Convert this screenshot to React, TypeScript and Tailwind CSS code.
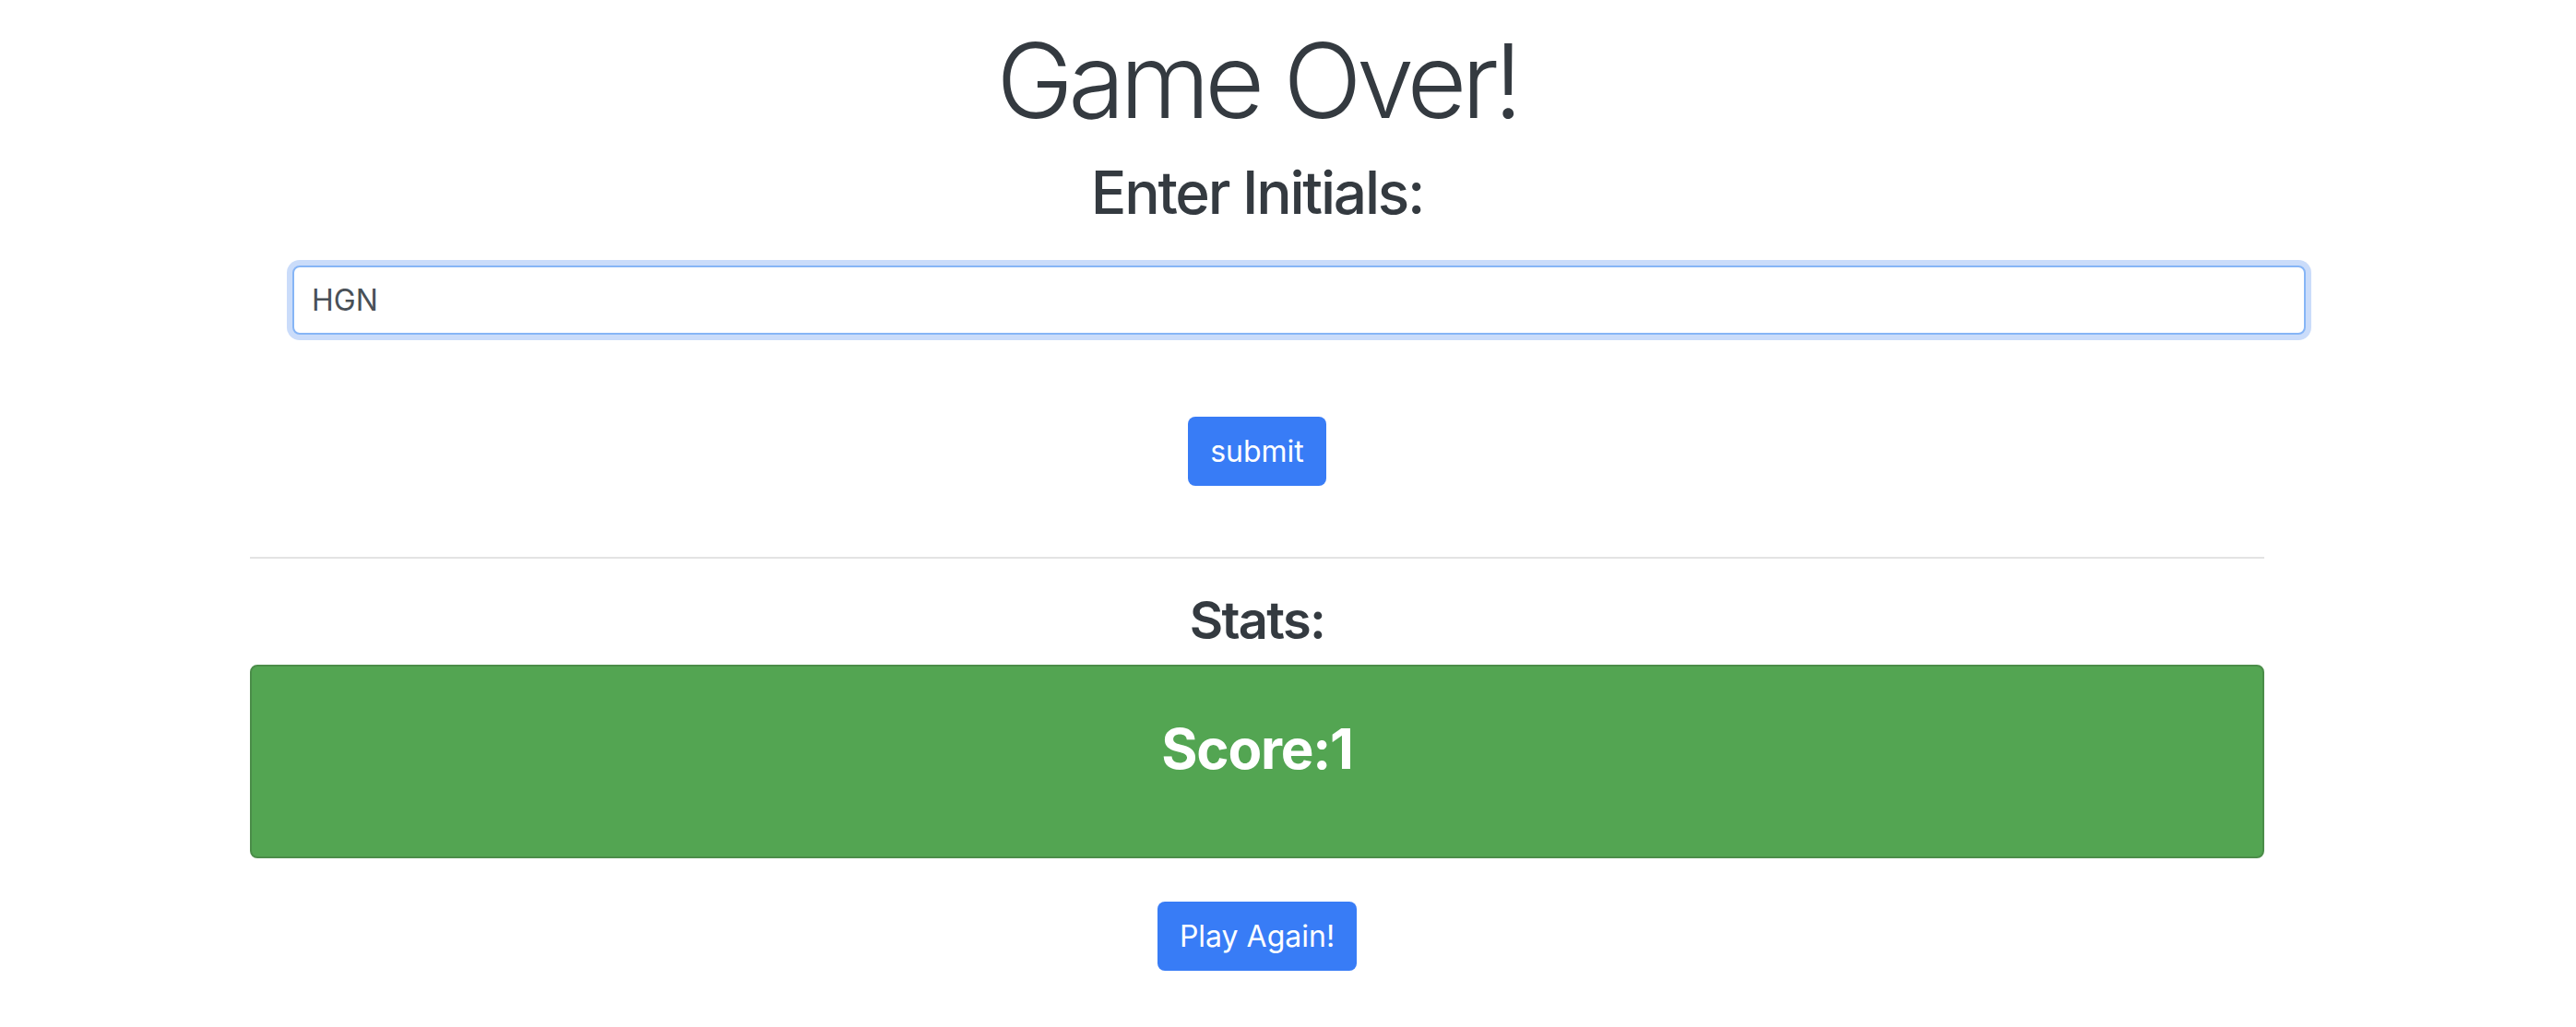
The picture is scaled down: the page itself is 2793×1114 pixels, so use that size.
import React from "react";

const App: React.FC = () => {
  return (
    <div className="min-h-screen bg-white font-['Inter',sans-serif] text-[#343a40]">
      <div className="ml-[271px] w-[2184px] flex flex-col items-center">
        <h1 className="mt-[31px] text-[112px] leading-none font-light tracking-[-0.05em]">
          Game Over!
        </h1>
        <h2 className="mt-[34px] text-[64px] leading-none font-medium tracking-[-0.035em]">
          Enter Initials:
        </h2>
        <div className="self-stretch ml-[46px] mr-[-45px] mt-[47px]">
          <input
            type="text"
            defaultValue="HGN"
            className="w-full h-[75px] px-[19px] text-[32px] text-[#495057] bg-white border-2 border-[#86b5f6] rounded-[8px] ring-[6px] ring-[#cadcfa] outline-none"
          />
        </div>
        <button className="mt-[89px] h-[75px] px-[24px] text-[32px] text-white bg-[#387cf6] rounded-[8px]">
          submit
        </button>
        <hr className="self-stretch mt-[77px] border-t-2 border-[#e3e3e3]" />
        <h3 className="mt-[39px] text-[56px] leading-none font-semibold tracking-[-0.03em]">
          Stats:
        </h3>
        <div className="self-stretch mt-[20px] h-[210px] bg-[#53a552] border-2 border-[#4b8d49] rounded-[8px] pt-[59px] flex justify-center">
          <h2 className="text-[60px] leading-none font-bold text-white tracking-[-0.02em]">
            Score:1
          </h2>
        </div>
        <button className="mt-[47px] h-[75px] px-[24px] text-[32px] text-white bg-[#387cf6] rounded-[8px]">
          Play Again!
        </button>
      </div>
    </div>
  );
};

export default App;
